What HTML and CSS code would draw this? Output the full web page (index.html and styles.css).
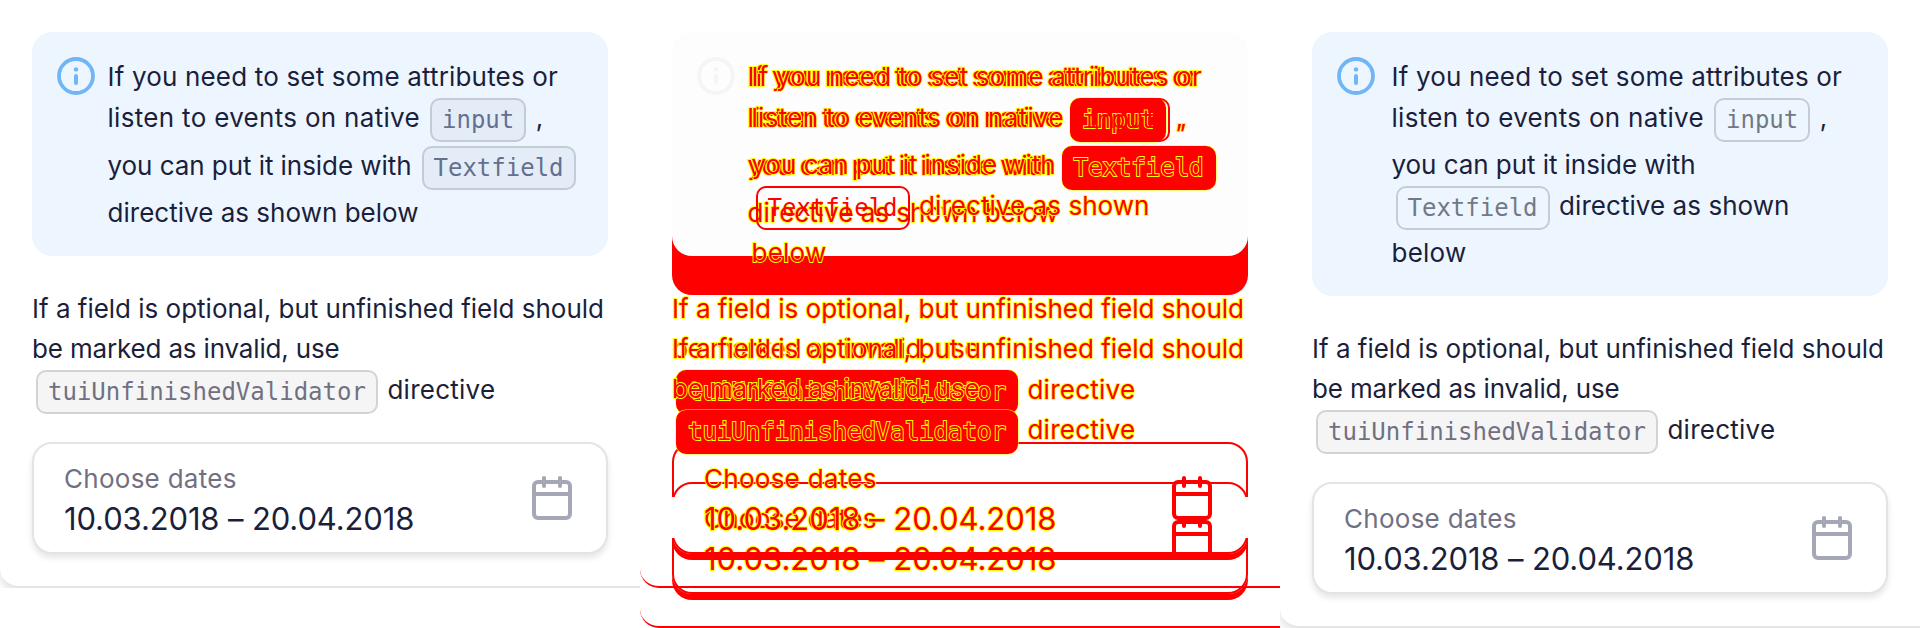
FILE: index.html
```
<!DOCTYPE html>
<html lang="en">
<head>
<meta charset="utf-8">
<title>Textfield comparison</title>
<link rel="stylesheet" href="styles.css">
</head>
<body>
<svg class="sprite" aria-hidden="true">
  <symbol id="info" viewBox="0 0 38 38"><circle cx="19" cy="19" r="17" fill="none" stroke="currentColor" stroke-width="3.8"/><circle cx="19" cy="12.4" r="2.2" fill="currentColor"/><path d="M19 19v7" fill="none" stroke="currentColor" stroke-width="4" stroke-linecap="round"/></symbol>
  <symbol id="calendar" viewBox="0 0 40 44"><rect x="2" y="6" width="36" height="36" rx="4" fill="none" stroke="currentColor" stroke-width="4"/><path d="M2 18h36M12 2v8M28 2v8" fill="none" stroke="currentColor" stroke-width="4" stroke-linecap="round"/></symbol>
</svg>
<main class="board">
  <section class="pane before">
    <div class="card">
      <div class="notice">
        <svg class="info"><use href="#info"/></svg>
        <div class="copy">
          <div class="line l1"><span class="s1">If you need to set some attributes or</span></div>
          <div class="line l2"><span class="s2">listen to events on native</span><code>input</code><span class="after">,</span></div>
          <div class="line l3"><span class="s3">you can put it inside with</span><code>Textfield</code></div>
          <div class="line"><span class="s4">directive as shown below</span></div>
        </div>
      </div>
      <div class="para">
        <div class="line"><span class="s5">If a field is optional, but unfinished field should</span></div>
        <div class="line"><span class="s6">be marked as invalid, use</span></div>
        <div class="line l7"><code class="lead">tuiUnfinishedValidator</code><span class="after s7">directive</span></div>
      </div>
      <div class="field">
        <div class="value"><span class="label">Choose dates</span><span class="dates">10.03.2018 – 20.04.2018</span></div>
        <svg class="calendar"><use href="#calendar"/></svg>
      </div>
    </div>
  </section>

  <section class="pane diff">
    <div class="layer after-state">
      <div class="card">
        <div class="notice">
          <div class="copy">
            <div class="line l1"><span class="s1">If you need to set some attributes or</span></div>
            <div class="line l2"><span class="s2">listen to events on native</span><code>input</code><span class="after">,</span></div>
            <div class="line l3"><span class="s3">you can put it inside with</span></div>
            <div class="line l4"><code class="lead">Textfield</code><span class="after s8">directive as shown</span></div>
            <div class="line"><span class="s9">below</span></div>
          </div>
        </div>
        <div class="para">
          <div class="line"><span class="s5">If a field is optional, but unfinished field should</span></div>
          <div class="line"><span class="s6">be marked as invalid, use</span></div>
          <div class="line l7"><code class="lead solid">tuiUnfinishedValidator</code><span class="after s7">directive</span></div>
        </div>
        <div class="field">
          <div class="value"><span class="label">Choose dates</span><span class="dates">10.03.2018 – 20.04.2018</span></div>
          <svg class="calendar"><use href="#calendar"/></svg>
        </div>
      </div>
    </div>
    <div class="layer before">
      <div class="card">
        <div class="notice">
          <svg class="info"><use href="#info"/></svg>
          <div class="copy">
            <div class="line l1"><span class="s1">If you need to set some attributes or</span></div>
            <div class="line l2"><span class="s2">listen to events on native</span><code class="solid">input</code><span class="after">,</span></div>
            <div class="line l3"><span class="s3">you can put it inside with</span><code class="solid">Textfield</code></div>
            <div class="line"><span class="s4">directive as shown below</span></div>
          </div>
        </div>
        <div class="para">
          <div class="line"><span class="s5">If a field is optional, but unfinished field should</span></div>
          <div class="line"><span class="s6">be marked as invalid, use</span></div>
          <div class="line l7"><code class="lead solid">tuiUnfinishedValidator</code><span class="after s7">directive</span></div>
        </div>
        <div class="field">
          <div class="value"><span class="label">Choose dates</span><span class="dates">10.03.2018 – 20.04.2018</span></div>
          <svg class="calendar"><use href="#calendar"/></svg>
        </div>
      </div>
    </div>
    <i class="same same-left"></i><i class="same same-right"></i>
  </section>

  <section class="pane after-state">
    <div class="card">
      <div class="notice">
        <svg class="info"><use href="#info"/></svg>
        <div class="copy">
          <div class="line l1"><span class="s1">If you need to set some attributes or</span></div>
          <div class="line l2"><span class="s2">listen to events on native</span><code>input</code><span class="after">,</span></div>
          <div class="line l3"><span class="s3">you can put it inside with</span></div>
          <div class="line l4"><code class="lead">Textfield</code><span class="after s8">directive as shown</span></div>
          <div class="line"><span class="s9">below</span></div>
        </div>
      </div>
      <div class="para">
        <div class="line"><span class="s5">If a field is optional, but unfinished field should</span></div>
        <div class="line"><span class="s6">be marked as invalid, use</span></div>
        <div class="line l7"><code class="lead">tuiUnfinishedValidator</code><span class="after s7">directive</span></div>
      </div>
      <div class="field">
        <div class="value"><span class="label">Choose dates</span><span class="dates">10.03.2018 – 20.04.2018</span></div>
        <svg class="calendar"><use href="#calendar"/></svg>
      </div>
    </div>
  </section>
</main>
</body>
</html>
```
FILE: styles.css
```
* { box-sizing: border-box; }
body { margin: 0; background: #fff; font-family: Inter, "Liberation Sans", sans-serif; font-size: 26px; color: #1b1f3b; }
.sprite { position: absolute; width: 0; height: 0; }
.board { display: grid; grid-template-columns: repeat(3, 640px); height: 628px; overflow: hidden; align-items: start; }
.pane { position: relative; overflow: hidden; }
.card { height: 588px; padding: 32px 32px 0; border-bottom: 2px solid #e4e4e4; border-bottom-left-radius: 19px; box-shadow: 0 4px 8px rgba(0, 0, 0, .12); }
.after-state .card { height: 628px; }

.notice { display: flex; height: 224px; padding: 24px 0 0 25px; border-radius: 20px; background: #edf6ff; }
.after-state .notice { height: 264px; }
.info { flex: none; width: 38px; height: 38px; margin-top: 1px; color: #70b6f6; }
.copy { padding-top: 1px; margin-left: 12.5px; }
.after-state .copy { margin-left: 16.5px; }

.line { display: flex; align-items: flex-start; height: 40px; line-height: 40px; white-space: nowrap; }
.l1 { height: 41px; }
.l2 { height: 48px; }
.l3 { height: 47px; }
.after-state .l2 { height: 47px; }
.after-state .l3 { height: 41px; }
.after-state .l4 { height: 47px; }
.s1 { letter-spacing: .17px; }
.s2 { letter-spacing: .311px; }
.s3 { letter-spacing: -.058px; }
.s4 { letter-spacing: .02px; }
.s5 { letter-spacing: -.011px; }
.s6 { letter-spacing: -.164px; }
.s7 { letter-spacing: .26px; }
.s8 { letter-spacing: .057px; }
.s9 { letter-spacing: .244px; }
.after { margin-left: 9.5px; }

code { flex: none; height: 44px; margin: 0 0 0 10px; padding: 0 10px; border: 2px solid #c3cbd6; border-radius: 10px; background: #e4edf7; color: #63708f; font: 24px/40px "DejaVu Sans Mono", monospace; letter-spacing: 0; }
code.lead { margin-left: 4px; }
.after-state .notice code { border-color: #c5ccd6; background: transparent; color: #727985; }
.para code { margin-top: .5px; border-color: #d3d3d4; background: #f5f5f5; color: #717083; }

.para { padding-top: 32.5px; height: 186px; }
.para .l7 { margin-top: 1px; }

.field { display: flex; justify-content: space-between; height: 112px; padding: 0 34px 0 30px; border: 2px solid #e4e4e5; border-radius: 20px; box-shadow: 0 4px 6px rgba(0, 0, 0, .1); background: #fff; }
.value { display: flex; flex-direction: column; white-space: nowrap; padding-top: 15px; }
.label { line-height: 40px; letter-spacing: .27px; color: #717083; }
.dates { font-size: 31px; line-height: 40px; letter-spacing: -.13px; font-weight: 420; }
.calendar { flex: none; width: 40px; height: 44px; margin-top: 32px; color: #a4a7b5; }

/* Difference view: both states laid over each other */
.diff { height: 628px; color: #f00; }
.layer { position: absolute; inset: 0; }
.diff span { color: #f00; font-weight: 400; -webkit-text-stroke: 1.8px #ff0; paint-order: stroke fill; }
.diff .dates { letter-spacing: -.03px; }
.diff .card { border-color: #f00; box-shadow: none; }
.diff .notice { background: linear-gradient(transparent 100px, #f00 100px); box-shadow: none; }
.diff .before .notice { background: #fdfdfd; }
.diff .after-state .notice { height: 263px; margin-bottom: 1px; }
.diff .after-state .copy { position: relative; z-index: 3; margin-left: 54.5px; }
.diff .after-state .para { position: relative; z-index: 2; }
.diff .after-state .notice code { border-color: #f00; color: #f00; }
.diff .info { color: #f5f5f5; }
.diff code.solid { background: #f00; border-color: #f00; color: #f00; -webkit-text-stroke: 1.8px #ff0; paint-order: stroke fill; box-shadow: 0 0 0 .5px #ff0; }
.diff .field { border-color: #f00; background: transparent; box-shadow: 0 6px 0 #f00; }
.diff .calendar { color: #f00; }
.same { position: absolute; z-index: 4; top: 497px; width: 8px; height: 41px; background: #fff; }
.same-left { left: 29px; }
.same-right { right: 29px; }
```
